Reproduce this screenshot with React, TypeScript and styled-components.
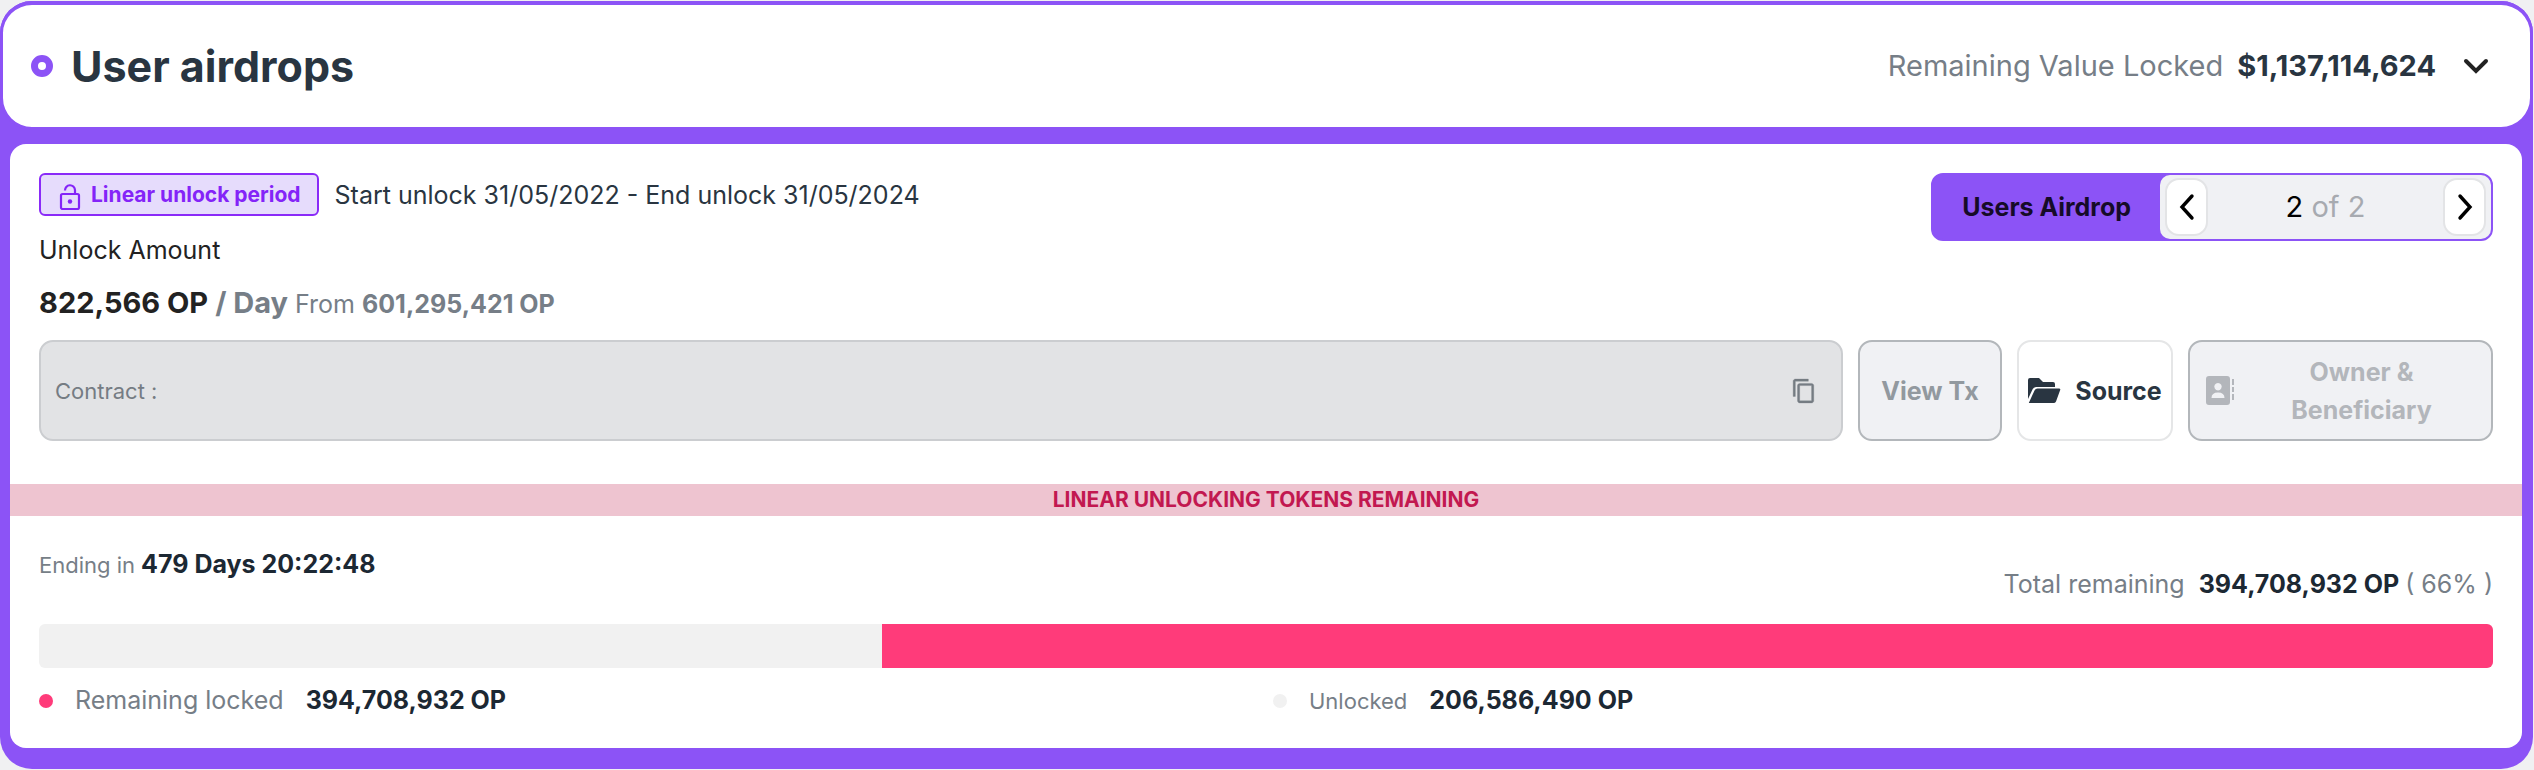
import React from "react";
import styled, { createGlobalStyle } from "styled-components";

const GlobalStyle = createGlobalStyle`
  *, *::before, *::after { box-sizing: border-box; }
  body { margin: 0; background: #f0f0f2; color: #293541; font-family: Inter, sans-serif; font-size: 25px; line-height: 38px; }
  button { font: inherit; cursor: pointer; }
  h1, p { margin: 0; }
`;

const purple = "#8c53f6";
const muted = "#767e87";

const Shell = styled.main`
  margin: 1px 1px 1px 0;
  padding-bottom: 21px;
  border-radius: 32px;
  background: ${purple};
`;

const Header = styled.header`
  display: flex;
  align-items: center;
  justify-content: space-between;
  height: 129px;
  padding: 0 40px 0 28px;
  border: solid ${purple};
  border-width: 4px 3px 3px;
  border-radius: 32px;
  background: #fff;
`;

const TitleGroup = styled.div`
  display: flex;
  align-items: center;
  gap: 18px;
`;

const Ring = styled.span`
  width: 22px;
  height: 22px;
  border: 7px solid ${purple};
  border-radius: 50%;
`;

const Title = styled.h1`
  font-size: 43px;
  line-height: 52px;
  font-weight: 700;
`;

const Summary = styled.div`
  display: flex;
  align-items: center;
  gap: 14px;
  font-size: 29px;
`;

const Muted = styled.span<{ $size?: number }>`
  color: ${muted};
  font-size: ${(p) => (p.$size ? `${p.$size}px` : "inherit")};
`;

const Strong = styled.strong<{ $color?: string; $size?: number }>`
  color: ${(p) => p.$color ?? "#1c2833"};
  font-size: ${(p) => (p.$size ? `${p.$size}px` : "inherit")};
  font-weight: 700;
`;

const ToggleButton = styled.button`
  display: flex;
  margin-left: 12px;
  padding: 0;
  border: 0;
  background: none;
`;

const Panel = styled.section`
  margin: 14px 11px 0 10px;
  padding: 29px 0 28px;
  border-radius: 16px;
  background: #fff;
`;

const Inset = styled.div`
  padding: 0 29px;
`;

const TopRow = styled.div`
  display: flex;
  justify-content: space-between;
  align-items: flex-start;
`;

const Details = styled.div`
  display: flex;
  flex-direction: column;
  gap: 15px;
`;

const PeriodRow = styled.div`
  display: flex;
  align-items: center;
  gap: 16px;
`;

const Tag = styled.span`
  display: flex;
  align-items: center;
  gap: 10px;
  height: 43px;
  padding: 0 16px 0 18px;
  border: 2px solid #8a2af8;
  border-radius: 6px;
  background: #e6dcfc;
  color: #8424f8;
  font-size: 21px;
  font-weight: 700;
`;

const Amount = styled.p`
  color: #222;
`;

const Pager = styled.nav`
  display: flex;
  align-items: stretch;
  height: 68px;
  border: 2px solid ${purple};
  border-radius: 12px;
  background: ${purple};
`;

const PagerLabel = styled.span`
  display: flex;
  align-items: center;
  padding: 0 29px;
  color: #160b28;
  font-weight: 700;
`;

const PagerControls = styled.div`
  display: flex;
  align-items: center;
  justify-content: space-between;
  width: 331px;
  padding: 0 5px;
  border-radius: 10px;
  background: #f0f1f4;
  color: #a7aab0;
  font-size: 29px;
`;

const Current = styled.span`
  color: #000;
`;

const PagerButton = styled.button`
  display: flex;
  align-items: center;
  justify-content: center;
  width: 43px;
  height: 58px;
  padding: 0;
  border: 2px solid #e3e4e6;
  border-radius: 14px;
  background: #fff;
`;

const Actions = styled.div`
  display: flex;
  gap: 15px;
  margin-top: 17px;
`;

const Contract = styled.div`
  display: flex;
  flex: 1;
  align-items: center;
  justify-content: space-between;
  padding: 0 24px 0 14px;
  border: 2px solid #cbcdd0;
  border-radius: 14px;
  background: #e2e3e5;
  color: #757c83;
  font-size: 22px;
`;

const CopyButton = styled.button`
  display: flex;
  padding: 0;
  border: 0;
  background: none;
  color: inherit;
`;

const Action = styled.button<{ $width: number; $tone?: "view" | "owner" }>`
  display: flex;
  align-items: center;
  justify-content: center;
  gap: 14px;
  width: ${(p) => p.$width}px;
  height: 101px;
  padding: 0 ${(p) => (p.$tone === "owner" ? 16 : 8)}px;
  border: 2px solid ${(p) => (p.$tone ? "#b3b7bb" : "#e5e6e7")};
  border-radius: 14px;
  background: ${(p) => (p.$tone ? "#f0f1f4" : "#fff")};
  color: ${(p) => (p.$tone === "view" ? "#92999f" : p.$tone === "owner" ? "#b3b6bb" : "#293541")};
  font-weight: 700;
`;

const ActionLabel = styled.span`
  flex: 1;
`;

const Banner = styled.div`
  margin-top: 43px;
  background: #eec4d0;
  color: #c21850;
  font-size: 21px;
  line-height: 32px;
  font-weight: 700;
  text-align: center;
`;

const StatusRow = styled.div`
  display: flex;
  justify-content: space-between;
  padding: 29px 0 21px;
`;

const Ending = styled.p`
  display: flex;
  align-items: baseline;
  gap: 6px;
`;

const Total = styled.p`
  display: flex;
  gap: 6px;
  margin-top: 20px;
`;

const TotalLabel = styled(Muted)`
  margin-right: 8px;
`;

const Track = styled.div`
  display: flex;
  justify-content: flex-end;
  height: 44px;
  border-radius: 6px;
  overflow: hidden;
  background: #f1f1f1;
`;

const Fill = styled.div`
  background: #ff3b7a;
`;

const Legend = styled.div`
  display: grid;
  grid-template-columns: 1fr 1fr;
  gap: 14px;
  margin-top: 13px;
`;

const LegendItem = styled.div`
  display: flex;
  align-items: baseline;
  gap: 22px;
`;

const Dot = styled.span<{ $color: string }>`
  align-self: center;
  width: 14px;
  height: 14px;
  border-radius: 50%;
  background: ${(p) => p.$color};
`;

const Arrow = ({ d }: { d: string }) => (
  <svg width="18" height="28" viewBox="0 0 18 28" fill="none" stroke="#000" strokeWidth="3.400" strokeLinecap="round" aria-hidden="true">
    <path d={d} />
  </svg>
);

const lockedPercent = 65.66;

export default function App() {
  return (
    <>
      <GlobalStyle />
      <Shell>
        <Header>
          <TitleGroup>
            <Ring />
            <Title>User airdrops</Title>
          </TitleGroup>
          <Summary>
            <Muted>Remaining Value Locked</Muted>
            <Strong $color="#293541">$1,137,114,624</Strong>
            <ToggleButton aria-label="Toggle details">
              <svg width="28" height="18" viewBox="0 0 28 18" fill="none" stroke="#222" strokeWidth="4" strokeLinecap="round" aria-hidden="true">
                <path d="M4 4l10 10L24 4" />
              </svg>
            </ToggleButton>
          </Summary>
        </Header>

        <Panel>
          <Inset>
            <TopRow>
              <Details>
                <PeriodRow>
                  <Tag>
                    <svg width="22" height="30" viewBox="0 0 22 30" fill="none" stroke="currentColor" strokeWidth="2.200" aria-hidden="true">
                      <path d="M6 10.500a5 5 0 0 1 10-.5v4" />
                      <rect x="2" y="14" width="18" height="15" rx="1.500" />
                      <circle cx="11" cy="21.500" r="2.200" fill="currentColor" stroke="none" />
                    </svg>
                    Linear unlock period
                  </Tag>
                  <span>Start unlock 31/05/2022 - End unlock 31/05/2024</span>
                </PeriodRow>
                <Amount>Unlock Amount</Amount>
                <Amount>
                  <Strong $color="#222" $size={29}>822,566 OP</Strong>{" "}
                  <Strong $color={muted} $size={29}>/ Day</Strong> <Muted>From</Muted>{" "}
                  <Strong $color={muted}>601,295,421 OP</Strong>
                </Amount>
              </Details>
              <Pager aria-label="Airdrops">
                <PagerLabel>Users Airdrop</PagerLabel>
                <PagerControls>
                  <PagerButton aria-label="Previous"><Arrow d="M14 3L4 14l10 11" /></PagerButton>
                  <span><Current>2</Current> of 2</span>
                  <PagerButton aria-label="Next"><Arrow d="M4 3l10 11L4 25" /></PagerButton>
                </PagerControls>
              </Pager>
            </TopRow>
            <Actions>
              <Contract>
                <span>Contract :</span>
                <CopyButton aria-label="Copy contract">
                  <svg width="26" height="26" viewBox="0 0 24 24" fill="currentColor" stroke="currentColor" strokeWidth="0.300" aria-hidden="true">
                    <path d="M16 1H4c-1.100 0-2 .9-2 2v14h2V3h12V1zm3 4H8c-1.100 0-2 .9-2 2v14c0 1.100.9 2 2 2h11c1.100 0 2-.9 2-2V7c0-1.100-.9-2-2-2zm0 16H8V7h11v14z" />
                  </svg>
                </CopyButton>
              </Contract>
              <Action $width={144} $tone="view">View Tx</Action>
              <Action $width={156}>
                <svg width="33" height="25" viewBox="0 0 33 25" fill="currentColor" aria-hidden="true">
                  <path d="M0 21V2q0-2 2-2h9l4 4h10q2 0 2 2v3H8Q5.500 9 4.500 11.500z" />
                  <path d="M9.500 10.500H31q2 0 1 2L28 23.500q-.7 1.500-2.500 1.500H.8L6.500 12.500q1-2 3-2z" />
                </svg>
                Source
              </Action>
              <Action $width={305} $tone="owner">
                <svg width="28" height="29" viewBox="0 0 28 29" fill="currentColor" aria-hidden="true">
                  <path fillRule="evenodd" d="M3 0h18q3 0 3 3v23q0 3-3 3H3q-3 0-3-3V3q0-3 3-3zm9 7a3.700 3.700 0 1 0 .01 0zM5.500 22q0-5.500 6.500-5.500t6.500 5.500z" />
                  <path d="M26 3h2v6h-2zM26 11h2v5h-2zM26 18h2v6h-2z" />
                </svg>
                <ActionLabel>Owner &amp; Beneficiary</ActionLabel>
              </Action>
            </Actions>
          </Inset>

          <Banner>LINEAR UNLOCKING TOKENS REMAINING</Banner>

          <Inset>
            <StatusRow>
              <Ending>
                <Muted $size={22}>Ending in</Muted>
                <Strong>479 Days 20:22:48</Strong>
              </Ending>
              <Total>
                <TotalLabel>Total remaining</TotalLabel>
                <Strong>394,708,932 OP</Strong>
                <Muted>( 66% )</Muted>
              </Total>
            </StatusRow>
            <Track>
              <Fill style={{ width: `${lockedPercent}%` }} />
            </Track>
            <Legend>
              <LegendItem>
                <Dot $color="#ff3b7a" />
                <Muted>Remaining locked</Muted>
                <Strong>394,708,932 OP</Strong>
              </LegendItem>
              <LegendItem>
                <Dot $color="#f1f1f1" />
                <Muted $size={22}>Unlocked</Muted>
                <Strong>206,586,490 OP</Strong>
              </LegendItem>
            </Legend>
          </Inset>
        </Panel>
      </Shell>
    </>
  );
}
